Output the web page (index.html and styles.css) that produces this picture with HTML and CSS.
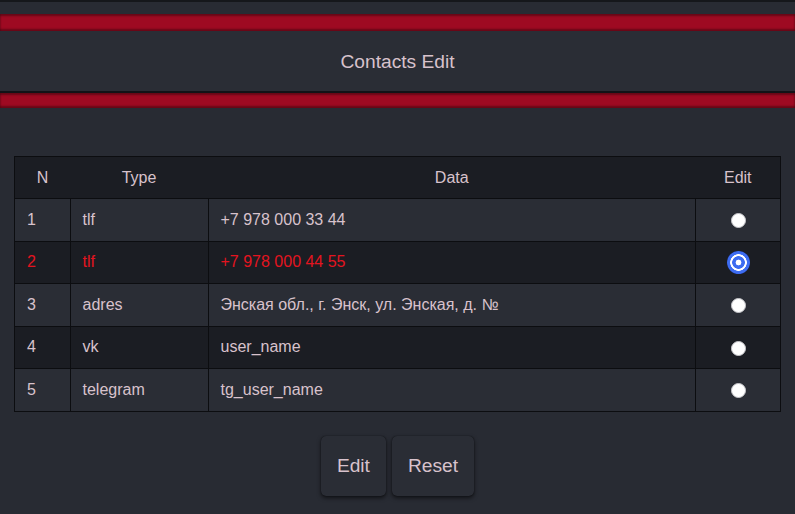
FILE: index.html
```html
<!DOCTYPE html>
<html lang="ru">
<head>
<meta charset="utf-8">
<title>Contacts Edit</title>
<link rel="stylesheet" href="styles.css">
</head>
<body>
<div class="topline"></div>
<div class="stripe first"></div>
<header class="title">Contacts Edit</header>
<div class="stripe"></div>
<main class="content">
  <table class="contacts">
    <thead>
      <tr><th class="c-n">N</th><th class="c-type">Type</th><th class="c-data">Data</th><th class="c-edit">Edit</th></tr>
    </thead>
    <tbody>
      <tr><td>1</td><td>tlf</td><td>+7 978 000 33 44</td><td class="c-edit"><span class="radio"></span></td></tr>
      <tr class="sel"><td>2</td><td>tlf</td><td>+7 978 000 44 55</td><td class="c-edit"><span class="radio on"></span></td></tr>
      <tr><td>3</td><td>adres</td><td>Энская обл., г. Энск, ул. Энская, д. №</td><td class="c-edit"><span class="radio"></span></td></tr>
      <tr><td>4</td><td>vk</td><td>user_name</td><td class="c-edit"><span class="radio"></span></td></tr>
      <tr><td>5</td><td>telegram</td><td>tg_user_name</td><td class="c-edit"><span class="radio"></span></td></tr>
    </tbody>
  </table>
  <div class="actions">
    <button class="btn">Edit</button>
    <button class="btn">Reset</button>
  </div>
</main>
</body>
</html>
```
FILE: styles.css
```css
html, body {
  margin: 0;
  padding: 0;
}
body {
  background: #282b33;
  font-family: "Liberation Sans", Arial, sans-serif;
  color: #d8c2cc;
  height: 514px;
  overflow: hidden;
}
.topline {
  height: 2px;
  background: #15171b;
}
.stripe {
  height: 15px;
  background: #9e0a22;
  box-shadow: inset 0 2px 2px rgba(0,0,0,0.35), inset 0 -2px 2px rgba(0,0,0,0.35);
}
.stripe.first {
  margin-top: 12px;
  height: 17px;
}
.title {
  height: 62px;
  box-sizing: border-box;
  background: #2a2d35;
  border-bottom: 2px solid #121317;
  display: flex;
  align-items: center;
  justify-content: center;
  font-size: 19.2px;
  padding-top: 2px;
}
.content {
  padding: 48px 14px 0;
}
.contacts {
  width: 100%;
  border-collapse: collapse;
  border: 1px solid #0c0d10;
  font-size: 16px;
}
.contacts th {
  background: #1b1d23;
  font-weight: normal;
  height: 41px;
  text-align: center;
  padding: 0;
}
.c-n { width: 55px; }
.c-type { width: 138px; }
.c-edit { width: 84px; text-align: center; }
.contacts td {
  height: 41.5px;
  padding: 0 12px;
  border: 1px solid #0c0d10;
  background: #2a2d35;
}
.contacts tbody tr:nth-child(even) td {
  background: #1b1d23;
}
.contacts td.c-edit {
  padding: 0;
  text-align: center;
}
.contacts tr.sel td {
  color: #e3141f;
}
.radio {
  display: inline-block;
  width: 15px;
  height: 15px;
  border-radius: 50%;
  background: #ffffff;
  vertical-align: middle;
  box-sizing: border-box;
  border: 1px solid #c8c8cc;
}
.radio.on {
  width: 23px;
  height: 23px;
  border: none;
  background: radial-gradient(circle, #ffffff 0 2.6px, #3d6cf0 3.2px 6px, #ffffff 6.6px 8px, #3d6cf0 8.6px 11px, #2a4fc8 11.5px);
}
.actions {
  display: flex;
  justify-content: center;
  gap: 6px;
  margin-top: 24px;
}
.btn {
  height: 60px;
  padding: 0 16px;
  background: #2a2d35;
  color: #d8c2cc;
  border: none;
  border-radius: 5px;
  font-family: "Liberation Sans", Arial, sans-serif;
  font-size: 19.2px;
  box-shadow: 0 2px 4px rgba(0,0,0,0.6), 0 0 1px rgba(0,0,0,0.8);
}
```
